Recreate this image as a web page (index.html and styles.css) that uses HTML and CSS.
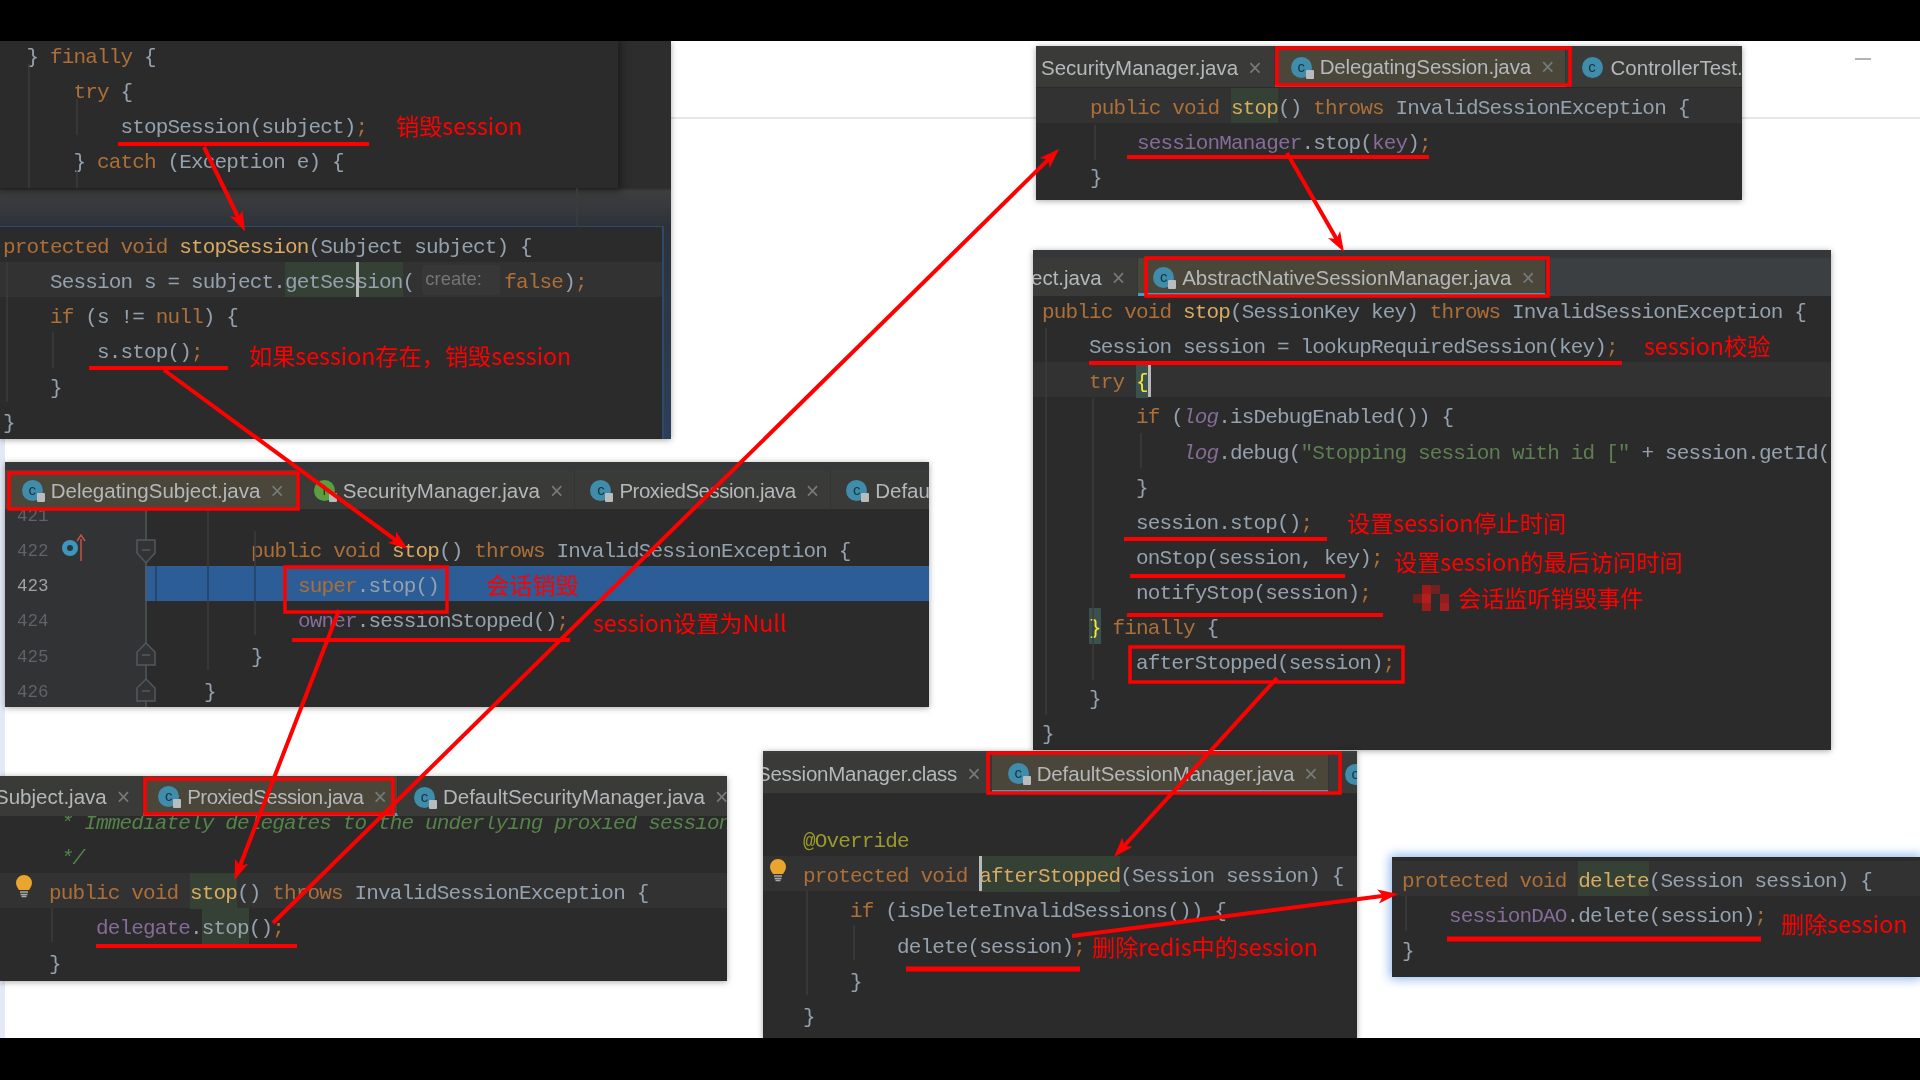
FILE: index.html
```html
<!DOCTYPE html>
<html lang="zh">
<head>
<meta charset="utf-8">
<title>Session stop flow</title>
<link rel="stylesheet" href="styles.css">
</head>
<body>
<div class="bar-top"></div>
<main class="canvas">
  <div class="strip"></div>
  <div class="rule"></div>
  <div class="minimize"></div>

  <section class="win win-a">
    <div class="code a2">
      <div class="line"><span class="k">protected void </span><span class="f">stopSession</span>(Subject subject) {</div>
      <div class="line cur">    Session s = subject.<span class="hl">getSes<span class="caret"></span>sion</span>(<span class="hint">create:</span><span class="k">false</span>)<span class="k">;</span></div>
      <div class="line">    <span class="k">if</span> (s != <span class="k">null</span>) {</div>
      <div class="line">        s.stop()<span class="k">;</span></div>
      <div class="line">    }</div>
      <div class="line">}</div>
    </div>
  </section>
  <section class="win win-a1">
    <div class="code a1">
      <div class="line">  } <span class="k">finally</span> {</div>
      <div class="line">      <span class="k">try</span> {</div>
      <div class="line">          stopSession(subject)<span class="k">;</span></div>
      <div class="line">      } <span class="k">catch</span> (Exception e) {</div>
      <div class="line">          <span class="k">if</span> (log.isDebugEnabled()) {</div>
    </div>
  </section>

  <section class="win win-d">
    <div class="tabs t-d">
      <div class="tab on plain"><span class="ico">c</span><span class="name">DelegatingSubject.java</span><span class="x">×</span></div>
      <div class="tab"><span class="ico green">I</span><span class="name">SecurityManager.java</span><span class="x">×</span></div>
      <div class="tab"><span class="ico">c</span><span class="name narrow">ProxiedSession.java</span><span class="x">×</span></div>
      <div class="tab"><span class="ico">c</span><span class="name">DefaultSecurityManager.java</span></div>
    </div>
    <div class="editor">
      <div class="gutter">
        <div class="num">421</div>
        <div class="num">422</div>
        <div class="num now">423</div>
        <div class="num">424</div>
        <div class="num">425</div>
        <div class="num">426</div>
      </div>
      <div class="code d">
        <div class="line"> </div>
        <div class="line">    <span class="k">public void </span><span class="f">stop</span>() <span class="k">throws</span> InvalidSessionException {</div>
        <div class="line sel">        <span class="k">super</span>.stop()</div>
        <div class="line">        <span class="p">owner</span>.sessionStopped()<span class="k">;</span></div>
        <div class="line">    }</div>
        <div class="line">}</div>
      </div>
    </div>
  </section>

  <section class="win win-c">
    <div class="tabs t-c">
      <div class="tab cut-c"><span class="name">Subject.java</span><span class="x">×</span></div>
      <div class="tab on"><span class="ico">c</span><span class="name narrow">ProxiedSession.java</span><span class="x">×</span></div>
      <div class="tab"><span class="ico">c</span><span class="name">DefaultSecurityManager.java</span><span class="x">×</span></div>
    </div>
    <div class="code c">
      <div class="line"><span class="cm"> * Immediately delegates to the underlying proxied session</span></div>
      <div class="line"><span class="cm"> */</span></div>
      <div class="line cur"><span class="k">public void </span><span class="hl f">stop</span>() <span class="k">throws</span> InvalidSessionException {</div>
      <div class="line">    <span class="p">delegate</span>.<span class="hl">stop</span>()<span class="k">;</span></div>
      <div class="line">}</div>
    </div>
  </section>

  <section class="win win-b">
    <div class="tabs t-b">
      <div class="tab cut-b"><span class="name">SecurityManager.java</span><span class="x">×</span></div>
      <div class="tab on"><span class="ico">c</span><span class="name tight">DelegatingSession.java</span><span class="x">×</span></div>
      <div class="tab"><span class="ico nolock">c</span><span class="name">ControllerTest.java</span></div>
    </div>
    <div class="code b">
      <div class="line cur"><span class="k">public void </span><span class="hl f">stop</span>() <span class="k">throws</span> InvalidSessionException {</div>
      <div class="line">    <span class="p">sessionManager</span>.stop(<span class="p">key</span>)<span class="k">;</span></div>
      <div class="line">}</div>
    </div>
  </section>

  <section class="win win-e">
    <div class="tabs t-e">
      <div class="tab cut-e"><span class="name">ect.java</span><span class="x">×</span></div>
      <div class="tab on"><span class="ico">c</span><span class="name">AbstractNativeSessionManager.java</span><span class="x">×</span></div>
    </div>
    <div class="code e">
      <div class="line"><span class="k">public void </span><span class="f">stop</span>(SessionKey key) <span class="k">throws</span> InvalidSessionException {</div>
      <div class="line">    Session session = lookupRequiredSession(key)<span class="k">;</span></div>
      <div class="line cur">    <span class="k">try</span> <span class="hl brace">{<span class="caret"></span></span></div>
      <div class="line">        <span class="k">if</span> (<span class="p it">log</span>.isDebugEnabled()) {</div>
      <div class="line">            <span class="p it">log</span>.debug(<span class="st">"Stopping session with id ["</span> + session.getId() + <span class="st">"]"</span>)<span class="k">;</span></div>
      <div class="line">        }</div>
      <div class="line">        session.stop()<span class="k">;</span></div>
      <div class="line">        onStop(session, key)<span class="k">;</span></div>
      <div class="line">        notifyStop(session)<span class="k">;</span></div>
      <div class="line">    <span class="hl brace">}</span> <span class="k">finally</span> {</div>
      <div class="line">        afterStopped(session)<span class="k">;</span></div>
      <div class="line">    }</div>
      <div class="line">}</div>
    </div>
  </section>

  <section class="win win-f">
    <div class="tabs t-f">
      <div class="tab cut-f"><span class="name tighter">SessionManager.class</span><span class="x">×</span></div>
      <div class="tab on"><span class="ico">c</span><span class="name tight">DefaultSessionManager.java</span><span class="x">×</span></div>
      <div class="tab"><span class="ico">c</span><span class="name">SessionManager.java</span></div>
    </div>
    <div class="code f-code">
      <div class="line"> </div>
      <div class="line"><span class="an">@Override</span></div>
      <div class="line cur"><span class="k">protected void </span><span class="caret"></span><span class="hl f">afterStopped</span>(Session session) {</div>
      <div class="line">    <span class="k">if</span> (isDeleteInvalidSessions()) {</div>
      <div class="line">        delete(session)<span class="k">;</span></div>
      <div class="line">    }</div>
      <div class="line">}</div>
    </div>
  </section>

  <section class="win win-g">
    <div class="code g">
      <div class="line cur"><span class="k">protected void </span><span class="hl f">delete</span>(Session session) {</div>
      <div class="line">    <span class="p">sessionDAO</span>.delete(session)<span class="k">;</span></div>
      <div class="line">}</div>
    </div>
  </section>

  <svg class="overlay" viewBox="0 41 1920 997" aria-hidden="true">
    <defs>
      <marker id="ah" markerUnits="userSpaceOnUse" markerWidth="24" markerHeight="18" refX="12" refY="9" orient="auto">
        <path d="M0 2 L20 9 L0 16 L5 9Z" fill="#f00"/>
      </marker>
      <g id="bulb">
        <path d="M8 0a8 8 0 0 1 8 8c0 3-2 5-3 7H3C2 13 0 11 0 8a8 8 0 0 1 8-8z" fill="#eaa52f"/>
        <path d="M4 17h8M4.500 19.500h7M5.500 21.500h5" stroke="#a9a9a9" stroke-width="1.500"/>
      </g>
    </defs>

    <g class="guides">
      <path d="M29 64V188M77 99V135M77 170V188M577 188V227"/>
      <path d="M7 262V402M53 332V368"/>
      <path d="M208 509V670M255 531V635"/>
      <path d="M52 908V942"/>
      <path d="M1046 328V715M1093 398V680M1141 433V468"/>
      <path d="M1095 125V160"/>
      <path d="M807 890V995M854 925V960"/>
      <path d="M1406 896V931"/>
    </g>
    <g class="sel-guides">
      <path d="M156 566V601M208 566V601M255 566V601"/>
    </g>

    <g class="fold">
      <path d="M146 509V707"/>
      <path d="M137 540h18v13l-9 10l-9-10z"/>
      <path d="M137 665h18v-13l-9-9l-9 9z"/>
      <path d="M137 701h18v-13l-9-9l-9 9z"/>
      <path d="M142 550h8M142 655h8M142 691h8"/>
    </g>
    <circle class="ov-c" cx="70" cy="548" r="8"/>
    <circle class="ov-i" cx="70" cy="548" r="3"/>
    <path class="ov-a" d="M81 561V539M77 541l4-6l4 6"/>

    <use href="#bulb" x="16" y="875"/>
    <use href="#bulb" x="770" y="859"/>

    <g class="mosaic">
      <rect x="1422" y="585" width="9" height="9" fill="#a01a1a"/>
      <rect x="1431" y="585" width="9" height="9" fill="#6e2222"/>
      <rect x="1413" y="594" width="9" height="9" fill="#7a1c1c"/>
      <rect x="1422" y="594" width="9" height="9" fill="#b02020"/>
      <rect x="1440" y="594" width="9" height="9" fill="#8e1e1e"/>
      <rect x="1422" y="603" width="9" height="8" fill="#9c1c1c"/>
      <rect x="1440" y="603" width="9" height="8" fill="#a61f1f"/>
    </g>

    <g class="ink">
      <path d="M118 144H369M89 368H228M292 640H570M96 946H297M1127 157H1429M1089 363H1622M1124 539H1327M1130 576H1345M1127 615H1383"/>
      <path class="thick" d="M906 969H1080M1447 939H1761"/>
      <rect x="9" y="473" width="289" height="36"/>
      <rect x="285" y="567" width="162" height="45"/>
      <rect x="145" y="779" width="248" height="35"/>
      <rect x="1277" y="48" width="293" height="37"/>
      <rect x="1146" y="258" width="402" height="38"/>
      <rect x="1130" y="647" width="273" height="35"/>
      <rect x="988" y="753" width="352" height="40"/>
      <path marker-end="url(#ah)" d="M204 147L241.500 224"/>
      <path marker-end="url(#ah)" d="M164 370L401.500 544.300"/>
      <path marker-end="url(#ah)" d="M339 610L237.400 872.500"/>
      <path marker-end="url(#ah)" d="M273 923L1053.300 154.600"/>
      <path marker-end="url(#ah)" d="M1287 153L1340 245"/>
      <path marker-end="url(#ah)" d="M1277 678L1119.400 851"/>
      <path marker-end="url(#ah)" d="M1072 936L1390 895"/>
    </g>
  </svg>

  <span class="note n1">销毁session</span>
  <span class="note n2">如果session存在，销毁session</span>
  <span class="note n3">会话销毁</span>
  <span class="note n4">session设置为Null</span>
  <span class="note n5">session校验</span>
  <span class="note n6">设置session停止时间</span>
  <span class="note n7">设置session的最后访问时间</span>
  <span class="note n8">会话监听销毁事件</span>
  <span class="note n9">删除redis中的session</span>
  <span class="note n10">删除session</span>
</main>
<div class="bar-bottom"></div>
</body>
</html>
```
FILE: styles.css
```css
* { box-sizing: border-box; }
html, body { margin: 0; height: 100%; overflow: hidden; background: #fff; }
body { display: flex; flex-direction: column; width: 1920px; height: 1080px; }

.bar-top { height: 41px; background: #000; flex: none; }
.bar-bottom { height: 42px; background: #000; flex: none; position: relative; z-index: 5; }
.canvas { position: relative; flex: 1; overflow: hidden; background: #fff; filter: blur(0.55px); }

.strip { position: absolute; left: 0; top: 398px; bottom: 0; width: 5px; background: #e3e9f5; }
.rule { position: absolute; left: 0; right: 0; top: 76px; height: 2px; background: #e6e6e6; }
.minimize { position: absolute; left: 1855px; top: 17px; width: 16px; height: 2px; background: #b4b4b4; }

/* windows on the free canvas */
.win { position: absolute; isolation: isolate; background: #2b2b2b; overflow: hidden; box-shadow: 0 1px 6px rgba(0,0,0,.35); }
.win-a  { left: 0; top: 0; width: 671px; height: 398px; background: linear-gradient(#2d2d2d 0, #2d2d2d 147px, #3e3e3e 150px, #2d323a 186px, #2c3f58 398px); }
.win-a1 { left: 0; top: 0; width: 618px; height: 147px; box-shadow: 0 0 8px 3px rgba(0,0,0,.4); }
.win-d  { left: 5px; top: 421px; width: 924px; height: 245px; }
.win-c  { left: 0; top: 735px; width: 727px; height: 205px; }
.win-b  { left: 1036px; top: 5px; width: 706px; height: 154px; }
.win-e  { left: 1033px; top: 209px; width: 798px; height: 500px; }
.win-f  { left: 763px; top: 710px; width: 594px; height: 290px; }
.win-g  { left: 1392px; top: 816px; width: 528px; height: 120px; box-shadow: 0 0 10px 2px #8db8ee; }

/* tab strips */
.tabs {
  display: flex; background: #3c3f41; position: relative; z-index: 1;
  font: 20.5px "Liberation Sans", Arial, sans-serif; color: #b4b8bb; white-space: nowrap;
}
.t-d { height: 47px; border-top: 8px solid #35373a; }
.t-c { height: 40px; }
.t-b { height: 41px; }
.t-e { height: 46px; border-top: 8px solid #35373a; }
.t-f { height: 42px; padding-top: 2px; }
.tab { display: flex; align-items: center; padding: 2px 13px 0 15.5px; border-right: 1px solid #323436; background: #3a3b38; flex: none; }
.tab.on { background: #4a4639; border-bottom: 3px solid #4a9dbb; padding-top: 4px; }
.tab.on.plain { border-bottom: 0; padding-top: 2px; }
.t-d .tab:first-child { padding-left: 16.7px; padding-right: 15.9px; }
.cut-c { margin-left: -5px; padding-left: 0; padding-right: 14px; }
.cut-b { padding-left: 5px; padding-right: 15px; }
.cut-e { margin-left: -2px; padding-left: 0; padding-right: 14px; }
.cut-f { margin-left: -6px; padding-left: 0; padding-right: 13px; }
.narrow { letter-spacing: -0.5px; }
.tight { letter-spacing: -0.13px; }
.tighter { letter-spacing: -0.25px; }
.ico {
  position: relative; width: 21px; height: 21px; margin-right: 8px; border-radius: 50%;
  background: #3f8dab; color: #17323d; font-size: 15px; line-height: 19px; text-align: center; flex: none;
}
.ico::after { content: ""; position: absolute; right: -2px; bottom: -1px; width: 8px; height: 9px; background: #b9bcbe; border-radius: 1px; }
.ico.nolock::after { display: none; }
.ico.green { background: #5a9e3f; color: #24401a; }
.x { margin-left: 10px; width: 11px; color: #777a7c; font-size: 23px; line-height: 20px; text-align: center; }

/* code */
.code {
  font: 21px/41px "Liberation Mono", "DejaVu Sans Mono", monospace; letter-spacing: -0.85px;
  color: #94a1ae; background: #2b2b2b;
}
.line { height: 35.15px; white-space: pre; }
.cur { background: #323232; }
.sel { background: #2c5d96; }
.k { color: #ad6f38; }
.f { color: #d9aa62; }
.p { color: #866c98; }
.it { font-style: italic; }
.st { color: #5f7f52; }
.cm { color: #548448; font-style: italic; }
.an { color: #9c9a2c; }
.hl { display: inline-block; height: 35.3px; background: #344134; }
.brace { background: #3b514d; color: #f5e632; }
.caret { position: relative; z-index: 1; display: inline-block; width: 0; height: 35px; border-left: 3px solid #b9b9b9; margin-right: -3px; vertical-align: top; }
.hint {
  display: inline-block; width: 78px; height: 30px; margin: 3px 4px 0 8px; padding-left: 3px; vertical-align: top;
  background: #373737; color: #757575; border-radius: 4px; font: 18.5px/28px "Liberation Sans", Arial, sans-serif; letter-spacing: 0;
}
.a1 { padding-left: 3px; margin-top: -4px; background: none; }
.a2 { padding-left: 3px; margin-top: 185px; width: 664px; height: 213px; border-top: 1px solid #2c4a6b; border-right: 2px solid #2c4a6b; }
.editor { display: flex; margin-top: -13px; }
.gutter { width: 140px; flex: none; background: #313335; padding-left: 12px; font: 17.5px/41px "Liberation Mono", monospace; color: #5f6366; }
.num { height: 35.15px; }
.now { color: #a4a3a3; }
.d { flex: 1; padding-left: 59px; background: #2b2b2b; }
.sel { margin-left: -59px; padding-left: 59px; }
.c { margin-top: -13px; padding-left: 49px; height: 200px; }
.b { padding-top: 1px; padding-left: 54px; height: 120px; }
.b .cur { margin-left: -54px; padding-left: 54px; }
.c .cur { margin-left: -49px; padding-left: 49px; }
.e { margin-top: -4px; padding-left: 9px; height: 470px; }
.e .cur { margin-left: -9px; padding-left: 9px; }
.f-code { margin-top: -7px; padding-left: 40px; height: 270px; }
.f-code .cur { margin-left: -40px; padding-left: 40px; }
.g { padding-top: 4px; padding-left: 10px; height: 120px; }
.g .cur { margin-left: -10px; padding-left: 10px; }
.a2 .cur { margin-left: -3px; padding-left: 3px; }

/* overlay with guides and red ink */
.overlay { position: absolute; left: 0; top: 0; width: 1920px; height: 997px; pointer-events: none; }
.guides path { fill: none; stroke: #3c3c3c; stroke-width: 1.5; }
.sel-guides path { fill: none; stroke: #27476e; stroke-width: 2; }
.fold path { fill: #313335; stroke: #54585c; stroke-width: 1.5; }
.ov-c { fill: #3f96ba; }
.ov-i { fill: #1f3a45; }
.ov-a { fill: none; stroke: #c5534a; stroke-width: 1.5; }
.ink path { fill: none; stroke: #f00; stroke-width: 4; }
.ink .thick { stroke-width: 5; }
.ink rect { fill: none; stroke: #f00; stroke-width: 3.5; }

/* red notes */
.note { position: absolute; font: 23.2px/30px "Noto Sans CJK SC", "Noto Sans", sans-serif; color: #f00; white-space: nowrap; }
.n1  { left: 396px;  top: 69px; }
.n2  { left: 249px;  top: 299px; }
.n3  { left: 486px;  top: 528px; }
.n4  { left: 593px;  top: 566px; }
.n5  { left: 1644px; top: 289px; }
.n6  { left: 1347px; top: 466px; }
.n7  { left: 1394px; top: 505px; }
.n8  { left: 1458px; top: 541px; }
.n9  { left: 1092px; top: 890px; }
.n10 { left: 1781px; top: 867px; }
```
